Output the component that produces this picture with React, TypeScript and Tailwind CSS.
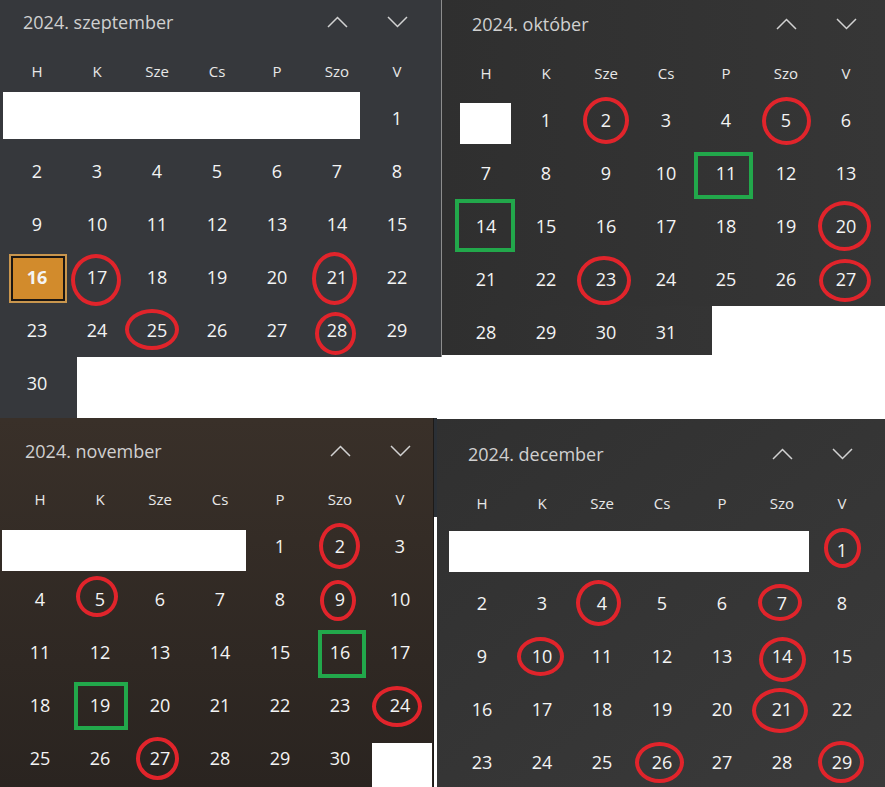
import React from 'react';
import { clsx } from 'clsx';

type Mark = { kind: 'red' | 'green' | 'today'; w: number; h: number; dx: number; dy: number };
type Marks = Record<number, Mark>;

const HEADS = ['H', 'K', 'Sze', 'Cs', 'P', 'Szo', 'V'];

const red = (w: number, h: number, dx: number, dy: number): Mark => ({ kind: 'red', w, h, dx, dy });
const green = (w: number, h: number, dx: number, dy: number): Mark => ({ kind: 'green', w, h, dx, dy });

const Chevron = ({ up }: { up?: boolean }) => (
  <svg width="21" height="12" viewBox="0 0 21 12" fill="none" stroke="#d2d2d2" strokeWidth="1.5">
    <polyline points={up ? '1,11 10.5,1.5 20,11' : '1,1 10.5,10.5 20,1'} />
  </svg>
);

const TitleRow = ({ title, indent }: { title: string; indent: number }) => (
  <div className="flex items-center h-[44px] w-[420px]">
    <span className="flex-1 text-[18px] text-[#d0d0d0]" style={{ paddingLeft: indent }}>{title}</span>
    <div className="w-[60px] flex justify-center pl-px"><Chevron up /></div>
    <div className="w-[60px] flex justify-center pl-px"><Chevron /></div>
  </div>
);

const Heads = ({ className }: { className?: string }) => (
  <div className={clsx('flex h-[42px]', className)}>
    {HEADS.map(h => (
      <div key={h} className="w-[60px] flex items-center justify-center text-[15px] text-[#e8e8e8]">{h}</div>
    ))}
  </div>
);

const Day = ({ n, mark }: { n: number; mark?: Mark }) => (
  <div className="relative w-[60px] h-[53px] shrink-0 flex items-center justify-center text-[18px] text-[#f4f4f4]">
    {mark && mark.kind === 'today' && (
      <span className="absolute left-[2px] top-[3px] w-[58px] h-[49px] border-2 border-[#c9964e]">
        <span className="block w-full h-full border-2 border-[#1c1713] bg-[#d28b2c]" />
      </span>
    )}
    {mark && mark.kind !== 'today' && (
      <span
        className={clsx(
          'absolute border-[4px]',
          mark.kind === 'red' ? 'rounded-[50%] border-[#e1242b]' : 'border-[#22a84b]'
        )}
        style={{
          width: mark.w,
          height: mark.h,
          left: 30 + mark.dx - mark.w / 2,
          top: 26.5 + mark.dy - mark.h / 2,
        }}
      />
    )}
    <span className={clsx('relative', mark?.kind === 'today' && 'font-bold')}>{n}</span>
  </div>
);

const Week = ({ days, marks = {} }: { days: number[]; marks?: Marks }) => (
  <div className="flex">
    {days.map(d => <Day key={d} n={d} mark={marks[d]} />)}
  </div>
);

const range = (a: number, b: number) => Array.from({ length: b - a + 1 }, (_, i) => a + i);

const sepMarks: Marks = {
  16: { kind: 'today', w: 58, h: 49, dx: 0, dy: 0 },
  17: red(50, 52, -1, 2.5),
  21: red(45, 53, -3, 0.5),
  25: red(54, 41, -5, -1.5),
  28: red(41, 43, -1.5, 2.5),
};

const octMarks: Marks = {
  2: red(46, 47, -0.5, 0),
  5: red(49, 48, 0, 0),
  11: green(59, 47, -2.5, 2),
  14: green(60, 53, -1, -1),
  20: red(53, 50, -2, -1),
  23: red(54, 49, -2, 1),
  27: red(52, 43, -1, 0.5),
};

const novMarks: Marks = {
  2: red(41, 46, -1, -1),
  5: red(42, 41, -3, -3),
  9: red(36, 41, -2, 0.5),
  16: green(48, 48, 2, 1.5),
  19: green(54, 48, 1, 0.5),
  24: red(50, 41, -3, 1),
  27: red(43, 43, -3, 0),
};

const decMarks: Marks = {
  1: red(37, 40, 0, -2.5),
  4: red(45, 46, -4, -1),
  7: red(44, 37, -2.5, -1.5),
  10: red(47, 39, -2, -0.5),
  14: red(47, 45, 0, 2.5),
  21: red(56, 45, -2.5, 0.5),
  26: red(49, 41, -3, -0.5),
  29: red(46, 42, -1, -1),
};

export default function App() {
  return (
    <div className="w-[885px] h-[787px] bg-white overflow-hidden font-['Open_Sans',sans-serif]">
      {/* top: szeptember + október */}
      <div className="flex h-[418px]">
        <div className="w-[441px] flex flex-col">
          <div className="bg-[#36383c] h-[357px] pl-[7px]">
            <TitleRow title="2024. szeptember" indent={16} />
            <Heads className="mt-[6px]" />
            <div className="flex">
              <div className="-ml-[4px] w-[357px] h-[47px] bg-white" />
              <div className="ml-[7px]"><Day n={1} /></div>
            </div>
            <Week days={range(2, 8)} />
            <Week days={range(9, 15)} />
            <Week days={range(16, 22)} marks={sepMarks} />
            <Week days={range(23, 29)} marks={sepMarks} />
          </div>
          <div className="w-[77px] h-[61px] bg-[#36383c] pl-[7px]">
            <Day n={30} />
          </div>
        </div>
        <div className="w-px h-[357px] bg-[#8d8d8d]" />
        <div className="w-[443px] flex flex-col">
          <div className="h-[306px] pt-[2px] pl-[14px] bg-linear-to-r from-[#2f2f2f] to-[#363636]">
            <TitleRow title="2024. október" indent={16} />
            <Heads className="mt-[6px]" />
            <div className="flex">
              <div className="ml-[4px] mt-[9px] w-[51px] h-[41px] bg-white" />
              <div className="ml-[5px] flex">
                {range(1, 6).map(d => <Day key={d} n={d} mark={octMarks[d]} />)}
              </div>
            </div>
            <Week days={range(7, 13)} marks={octMarks} />
            <Week days={range(14, 20)} marks={octMarks} />
            <Week days={range(21, 27)} marks={octMarks} />
          </div>
          <div className="w-[270px] h-[49px] overflow-hidden pl-[14px] bg-linear-to-r from-[#2f2f2f] to-[#343434]">
            <Week days={range(28, 31)} />
          </div>
        </div>
      </div>

      {/* bottom: november + december */}
      <div className="flex h-[369px]">
        <div className="w-[434px] h-[369px] pt-[11px] pl-[10px] border-r border-[#1d1a18] bg-linear-to-b from-[#393029] to-[#2a2420]">
          <TitleRow title="2024. november" indent={15} />
          <Heads className="mt-[5px]" />
          <div className="flex">
            <div className="-ml-[8px] mt-[10px] w-[244px] h-[41px] bg-white" />
            <div className="ml-[4px] flex">
              {range(1, 3).map(d => <Day key={d} n={d} mark={novMarks[d]} />)}
            </div>
          </div>
          <Week days={range(4, 10)} marks={novMarks} />
          <Week days={range(11, 17)} marks={novMarks} />
          <Week days={range(18, 24)} marks={novMarks} />
          <div className="flex">
            {range(25, 30).map(d => <Day key={d} n={d} mark={novMarks[d]} />)}
            <div className="ml-[2px] mt-[11px] w-[60px] h-[44px] bg-white" />
          </div>
        </div>
        <div className="w-[3px]">
          <div className="h-[99px] bg-[#2b3036]" />
        </div>
        <div className="w-[448px] h-[368px] mt-px pt-[13px] pl-[15px] bg-linear-to-br from-[#303030] via-[#353535] to-[#3a3a3a]">
          <TitleRow title="2024. december" indent={16} />
          <Heads className="mt-[6px]" />
          <div className="flex">
            <div className="-ml-[3px] mt-[7px] w-[360px] h-[41px] bg-white" />
            <div className="ml-[3px]"><Day n={1} mark={decMarks[1]} /></div>
          </div>
          <Week days={range(2, 8)} marks={decMarks} />
          <Week days={range(9, 15)} marks={decMarks} />
          <Week days={range(16, 22)} marks={decMarks} />
          <Week days={range(23, 29)} marks={decMarks} />
        </div>
      </div>
    </div>
  );
}
